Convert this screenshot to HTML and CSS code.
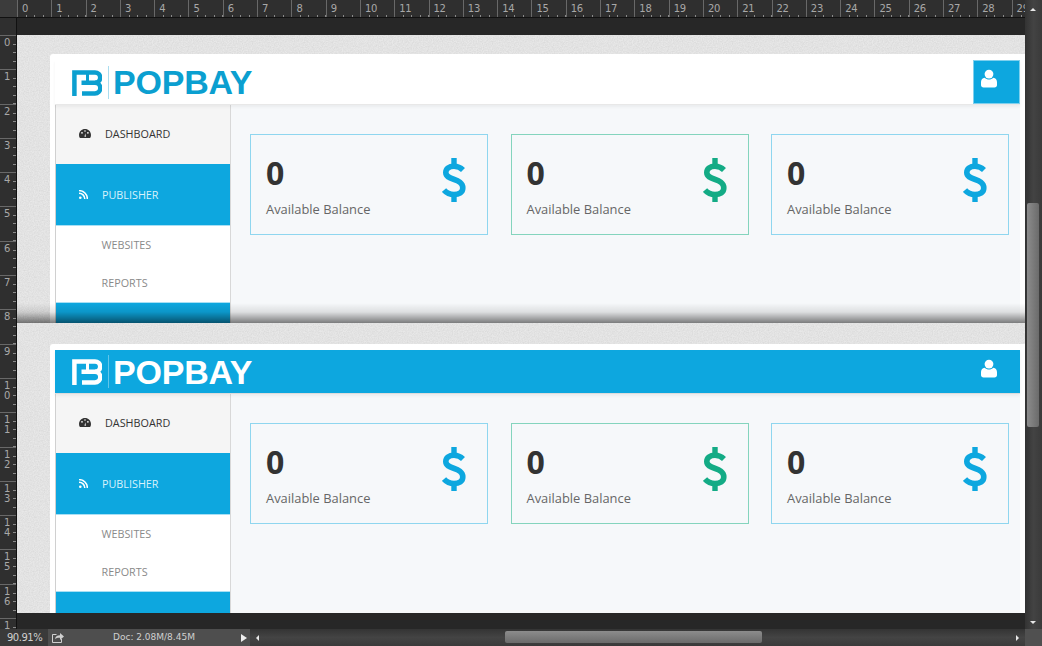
FILE: index.html
```html
<!DOCTYPE html>
<html lang="en">
<head>
<meta charset="utf-8">
<title>POPBAY</title>
<link rel="stylesheet" href="styles.css">
</head>
<body>
<svg class="defs" width="0" height="0" aria-hidden="true">
  <symbol id="mark" viewBox="0 0 30 26">
    <path d="M2.400 26V2.400H23a5.200 5.200 0 0 1 0 10.400H9.500" fill="none" stroke="currentColor" stroke-width="4.500"/>
    <path d="M23 12.800a5.300 5.300 0 0 1 0 10.600H10" fill="none" stroke="currentColor" stroke-width="4.500"/>
    <path d="M15.500 3v9" fill="none" stroke="currentColor" stroke-width="3"/>
  </symbol>
  <symbol id="dollar" viewBox="0 0 24 44">
    <path d="M21 12C18.500 9.500 15.500 8.300 12 8.300 7 8.300 3.800 10.500 3.800 14.500c0 8.500 17 5 17 15.500 0 4.500-3.800 6.500-8.800 6.500-3.800 0-7.500-1.500-10-4.500" fill="none" stroke="currentColor" stroke-width="5.600"/>
    <path d="M9.300 0h5.400v8h-5.400zM9.300 36h5.400v8h-5.400z" fill="currentColor"/>
  </symbol>
  <symbol id="user" viewBox="0 0 16 18">
    <circle cx="8" cy="4.600" r="4.400" fill="currentColor"/>
    <path d="M0 15.500V12.500C0 10 1.500 8.600 3.600 8.200 5 9.400 6.400 10 8 10s3-.6 4.400-1.800C14.500 8.600 16 10 16 12.500v3c0 1.500-1 2.500-2.500 2.500h-11C1 18 0 17 0 15.500z" fill="currentColor"/>
  </symbol>
  <symbol id="gauge" viewBox="0 0 12 9">
    <path d="M6 0C2.700 0 0 2.600 0 6c0 1.200.3 2.200.9 3h10.200c.6-.8.900-1.800.9-3 0-3.400-2.700-6-6-6z" fill="currentColor"/>
    <circle cx="3" cy="3.800" r=".9" fill="#f5f5f5"/><circle cx="8.900" cy="3.800" r=".9" fill="#f5f5f5"/><circle cx="6" cy="2" r=".8" fill="#f5f5f5"/>
    <path d="M5.500 7.800 6.200 4.300l.8 3.500z" fill="#f5f5f5"/>
  </symbol>
  <symbol id="rss" viewBox="0 0 9 9">
    <circle cx="1.300" cy="7.700" r="1.300" fill="currentColor"/>
    <path d="M0 3.200A5.800 5.800 0 0 1 5.800 9M0 .6A8.400 8.400 0 0 1 8.400 9" fill="none" stroke="currentColor" stroke-width="1.500"/>
  </symbol>
</svg>

<div class="app">
  <div class="ruler-top">
    <span class="corner"></span>
    <span class="tick">0</span><span class="tick">1</span><span class="tick">2</span><span class="tick">3</span><span class="tick">4</span><span class="tick">5</span><span class="tick">6</span><span class="tick">7</span><span class="tick">8</span><span class="tick">9</span><span class="tick">10</span><span class="tick">11</span><span class="tick">12</span><span class="tick">13</span><span class="tick">14</span><span class="tick">15</span><span class="tick">16</span><span class="tick">17</span><span class="tick">18</span><span class="tick">19</span><span class="tick">20</span><span class="tick">21</span><span class="tick">22</span><span class="tick">23</span><span class="tick">24</span><span class="tick">25</span><span class="tick">26</span><span class="tick">27</span><span class="tick">28</span><span class="tick">29</span>
  </div>

  <div class="vscroll">
    <span class="arrow-up"></span>
    <span class="vthumb"></span>
    <span class="arrow-down"></span>
  </div>

  <div class="ruler-left">
    <span class="vtick">0</span><span class="vtick">1</span><span class="vtick">2</span><span class="vtick">3</span><span class="vtick">4</span><span class="vtick">5</span><span class="vtick">6</span><span class="vtick">7</span><span class="vtick">8</span><span class="vtick">9</span><span class="vtick">1<br>0</span><span class="vtick">1<br>1</span><span class="vtick">1<br>2</span><span class="vtick">1<br>3</span><span class="vtick">1<br>4</span><span class="vtick">1<br>5</span><span class="vtick">1<br>6</span><span class="vtick">1</span>
  </div>

  <main class="workspace">
    <div class="canvas">
      <section class="shot shot-first">
        <div class="page">
          <header class="topbar">
            <div class="brand">
              <svg class="mark"><use href="#mark"/></svg>
              <span class="brand-rule"></span>
              <span class="brand-name">POPBAY</span>
            </div>
            <button class="user-btn" type="button"><svg class="user-icon"><use href="#user"/></svg></button>
          </header>
          <div class="body">
            <nav class="side">
              <a class="nav nav-dash"><svg class="gauge"><use href="#gauge"/></svg>DASHBOARD</a>
              <a class="nav nav-pub"><svg class="rss"><use href="#rss"/></svg>PUBLISHER</a>
              <a class="sub sub-first">WEBSITES</a>
              <a class="sub">REPORTS</a>
              <div class="nav-next"></div>
            </nav>
            <div class="content">
              <article class="stat stat-blue"><div><p class="num">0</p><p class="label">Available Balance</p></div><svg class="dollar"><use href="#dollar"/></svg></article>
              <article class="stat stat-green"><div><p class="num">0</p><p class="label">Available Balance</p></div><svg class="dollar"><use href="#dollar"/></svg></article>
              <article class="stat stat-blue"><div><p class="num">0</p><p class="label">Available Balance</p></div><svg class="dollar"><use href="#dollar"/></svg></article>
            </div>
          </div>
        </div>
      </section>

      <section class="shot shot-second">
        <div class="page">
          <header class="topbar topbar-blue">
            <div class="brand">
              <svg class="mark"><use href="#mark"/></svg>
              <span class="brand-rule"></span>
              <span class="brand-name">POPBAY</span>
            </div>
            <button class="user-btn" type="button"><svg class="user-icon"><use href="#user"/></svg></button>
          </header>
          <div class="body">
            <nav class="side">
              <a class="nav nav-dash"><svg class="gauge"><use href="#gauge"/></svg>DASHBOARD</a>
              <a class="nav nav-pub"><svg class="rss"><use href="#rss"/></svg>PUBLISHER</a>
              <a class="sub sub-first">WEBSITES</a>
              <a class="sub">REPORTS</a>
              <div class="nav-next"></div>
            </nav>
            <div class="content">
              <article class="stat stat-blue"><div><p class="num">0</p><p class="label">Available Balance</p></div><svg class="dollar"><use href="#dollar"/></svg></article>
              <article class="stat stat-green"><div><p class="num">0</p><p class="label">Available Balance</p></div><svg class="dollar"><use href="#dollar"/></svg></article>
              <article class="stat stat-blue"><div><p class="num">0</p><p class="label">Available Balance</p></div><svg class="dollar"><use href="#dollar"/></svg></article>
            </div>
          </div>
        </div>
      </section>
    </div>
  </main>

  <footer class="status">
    <span class="zoom">90.91%</span>
    <div class="doc">
      <svg class="share" viewBox="0 0 12 11"><path d="M.5 2.500h4M.5 2.500v8h9V7" fill="none" stroke="currentColor"/><path d="M3 7c.3-2.500 2-3.800 5-3.800V1l4 3.500L8 8V5.700C5.800 5.600 4.300 6 3 7z" fill="currentColor"/></svg>
      <span class="doc-text">Doc: 2.08M/8.45M</span>
      <span class="doc-arrow"></span>
    </div>
    <div class="hscroll">
      <span class="arrow-left"></span>
      <span class="hthumb"></span>
      <span class="arrow-right"></span>
    </div>
    <span class="grip"></span>
  </footer>
</div>
</body>
</html>
```
FILE: styles.css
```css
* { box-sizing: border-box; }

html, body {
  margin: 0;
  width: 1042px;
  height: 646px;
  overflow: hidden;
  background: #272727;
}

.defs { position: absolute; }

p { margin: 0; }

.app {
  display: grid;
  grid-template-columns: 17px 1008px 17px;
  grid-template-rows: 18px 611px 17px;
  width: 1042px;
  height: 646px;
  font-family: "Open Sans", sans-serif;
}

/* rulers */
.ruler-top {
  grid-column: 1 / 3;
  grid-row: 1;
  display: flex;
  overflow: hidden;
  background-color: #2f2f2f;
  border-bottom: 1px solid #111;
}

.corner {
  flex: 0 0 17px;
  background: #3c3c3c;
}

.tick {
  flex: 0 0 34.3px;
  height: 17px;
  padding: 3px 0 0 4px;
  border-left: 1px solid #686868;
  font: 10px/12px "DejaVu Sans", sans-serif;
  color: #a8a8a8;
  letter-spacing: -0.3px;
  background-image: repeating-linear-gradient(to right, transparent 0 7.575px, #8a8a8a 7.575px 8.575px);
  background-size: 100% 2px;
  background-position: 0 100%;
  background-repeat: no-repeat;
}

.ruler-left {
  grid-column: 1;
  grid-row: 2;
  display: flex;
  flex-direction: column;
  padding-top: 17px;
  overflow: hidden;
  background: #2f2f2f;
  border-right: 1px solid #111;
}

.vtick {
  flex: 0 0 34.3px;
  padding: 2px 0 0 4px;
  border-top: 1px solid #686868;
  font: 10px/10px "DejaVu Sans", sans-serif;
  color: #a8a8a8;
  background-image: repeating-linear-gradient(to bottom, transparent 0 7.575px, #8a8a8a 7.575px 8.575px);
  background-size: 3px 100%;
  background-position: 100% 0;
  background-repeat: no-repeat;
}

/* right scrollbar */
.vscroll {
  grid-column: 3;
  grid-row: 1 / 3;
  position: relative;
  background: linear-gradient(to right, #333, #434343 50%, #3a3a3a);
}

.vthumb {
  position: absolute;
  left: 2px;
  top: 203px;
  width: 12px;
  height: 224px;
  border-radius: 2px;
  background: linear-gradient(to right, #8c8c8c, #6b6b6b);
}

.arrow-up,
.arrow-down {
  position: absolute;
  left: 5px;
  width: 0;
  height: 0;
  border-left: 3px solid transparent;
  border-right: 3px solid transparent;
}

.arrow-up { top: 8px; border-bottom: 3px solid #e8e8e8; }
.arrow-down { top: 621px; border-top: 3px solid #e8e8e8; }

/* workspace */
.workspace {
  grid-column: 2;
  grid-row: 2;
  padding: 17px 0 16px;
  background: #272727;
  overflow: hidden;
}

.canvas {
  height: 578px;
  overflow: hidden;
  background-color: #e8e8e8;
  background-image: url("data:image/svg+xml,%3Csvg xmlns='http://www.w3.org/2000/svg' width='240' height='240'%3E%3Cfilter id='n'%3E%3CfeTurbulence type='fractalNoise' baseFrequency='.8' numOctaves='2' stitchTiles='stitch'/%3E%3CfeColorMatrix values='0 0 0 0 .45 0 0 0 0 .45 0 0 0 0 .45 .45 0 0 0 -.12'/%3E%3C/filter%3E%3Crect width='240' height='240' filter='url(%23n)'/%3E%3C/svg%3E");
}

.shot {
  position: relative;
  padding-left: 33px;
  overflow: hidden;
}

.shot-first {
  height: 288px;
  padding-top: 19px;
}

.shot-first::after {
  content: "";
  position: absolute;
  left: 0;
  right: 0;
  bottom: 0;
  height: 20px;
  background: linear-gradient(to bottom, rgba(0,0,0,0), rgba(0,0,0,.1) 45%, rgba(0,0,0,.5));
}

.shot-second {
  height: 290px;
  padding-top: 21px;
}

.page {
  padding: 6px 5px 0;
  background: #fff;
  border-radius: 3px 0 0 0;
  height: 100%;
}

/* header */
.topbar {
  position: relative;
  display: flex;
  align-items: stretch;
  justify-content: space-between;
  height: 45px;
  color: #0b9fd0;
  border-bottom: 1px solid #e8e8e8;
  box-shadow: 0 2px 3px rgba(0,0,0,.05);
}

.topbar-blue {
  height: 44px;
  background: #0da7df;
  color: #fff;
  border-bottom-color: #dcdcdc;
}

.brand {
  display: flex;
  align-items: center;
  padding-left: 17px;
}

.mark {
  width: 30px;
  height: 26px;
  margin-top: 1px;
}

.brand-rule {
  width: 1px;
  height: 33px;
  margin: 0 4px 0 6px;
  background: currentColor;
  opacity: .35;
}

.brand-name {
  font: bold 34px/1 "Liberation Sans", sans-serif;
  letter-spacing: -0.2px;
}

.user-btn {
  display: flex;
  width: 47px;
  padding: 8px 0 0 7px;
  border: 1px solid #7fd0ee;
  background: #0da7df;
  color: #fff;
}

.topbar-blue .user-btn { border-color: #0da7df; }

.user-icon {
  width: 16px;
  height: 19px;
}

/* body */
.body {
  display: flex;
  height: 560px;
}

.side {
  flex: 0 0 176px;
  display: flex;
  flex-direction: column;
  border-left: 1px solid #d0d0d0;
  border-right: 1px solid #d8d8d8;
  background: #fff;
}

.nav {
  display: flex;
  align-items: center;
  font-size: 10.8px;
}

.nav-dash {
  height: 59px;
  padding: 0 0 2px 23px;
  background: #f5f5f5;
  color: #333;
}

.nav-pub {
  height: 62px;
  padding: 0 0 0 23px;
  background: #0da7df;
  color: #d8f2fc;
  border-bottom: 1px solid #a8dff4;
}

.gauge {
  width: 12px;
  height: 9px;
  margin-right: 14px;
  color: #333;
}

.rss {
  width: 9px;
  height: 9px;
  margin-right: 14px;
  color: #fff;
}

.sub {
  display: flex;
  align-items: center;
  height: 38px;
  padding: 0 0 2px 45.5px;
  font-size: 10.8px;
  color: #8a8a8a;
}

.nav-next {
  flex: 1;
  background: #0da7df;
  border-top: 1px solid #a8dff4;
}

.content {
  flex: 1;
  display: flex;
  align-items: flex-start;
  gap: 22.5px;
  padding: 29px 0 0 19px;
  background: #f6f8fa;
}

.stat {
  display: flex;
  justify-content: space-between;
  flex: 0 0 238px;
  height: 101px;
  padding: 20px 21px 0 15px;
  border: 1px solid #8fd6ef;
}

.stat-green { border-color: #84d4bd; }

.num {
  font-size: 32px;
  font-weight: 700;
  line-height: 36px;
  color: #333;
}

.label {
  margin-top: 10px;
  font-size: 12.9px;
  line-height: 17px;
  color: #666;
}

.dollar {
  width: 24px;
  height: 44px;
  margin-top: 3px;
  color: #0da7df;
}

.stat-green .dollar { color: #13ab85; }

/* status bar */
.status {
  grid-column: 1 / 4;
  grid-row: 3;
  display: flex;
  background: #3a3a3a;
  color: #d0d0d0;
  font: 10px/17px "DejaVu Sans", sans-serif;
}

.zoom {
  flex: 0 0 48px;
  padding-left: 7px;
  letter-spacing: -0.5px;
}

.doc {
  flex: 0 0 202px;
  display: flex;
  align-items: center;
  background: #4e4e4e;
}

.share {
  width: 12px;
  height: 11px;
  margin-left: 4px;
}

.doc-text {
  margin-left: 49px;
  width: 80px;
  font-size: 9px;
  white-space: nowrap;
}

.doc-arrow {
  width: 0;
  height: 0;
  margin-left: 48px;
  border-top: 4px solid transparent;
  border-bottom: 4px solid transparent;
  border-left: 6px solid #eee;
}

.hscroll {
  position: relative;
  flex: 0 0 775px;
  background: linear-gradient(to bottom, #343434, #444 50%, #3a3a3a);
}

.hthumb {
  position: absolute;
  left: 255px;
  top: 2px;
  width: 257px;
  height: 12px;
  border-radius: 2px;
  background: linear-gradient(to bottom, #8c8c8c, #6b6b6b);
}

.arrow-left,
.arrow-right {
  position: absolute;
  top: 6px;
  width: 0;
  height: 0;
  border-top: 3px solid transparent;
  border-bottom: 3px solid transparent;
}

.arrow-left { left: 6px; border-right: 3px solid #e8e8e8; }
.arrow-right { right: 6px; border-left: 3px solid #e8e8e8; }

.grip {
  flex: 1;
  background: #505050;
}
```
